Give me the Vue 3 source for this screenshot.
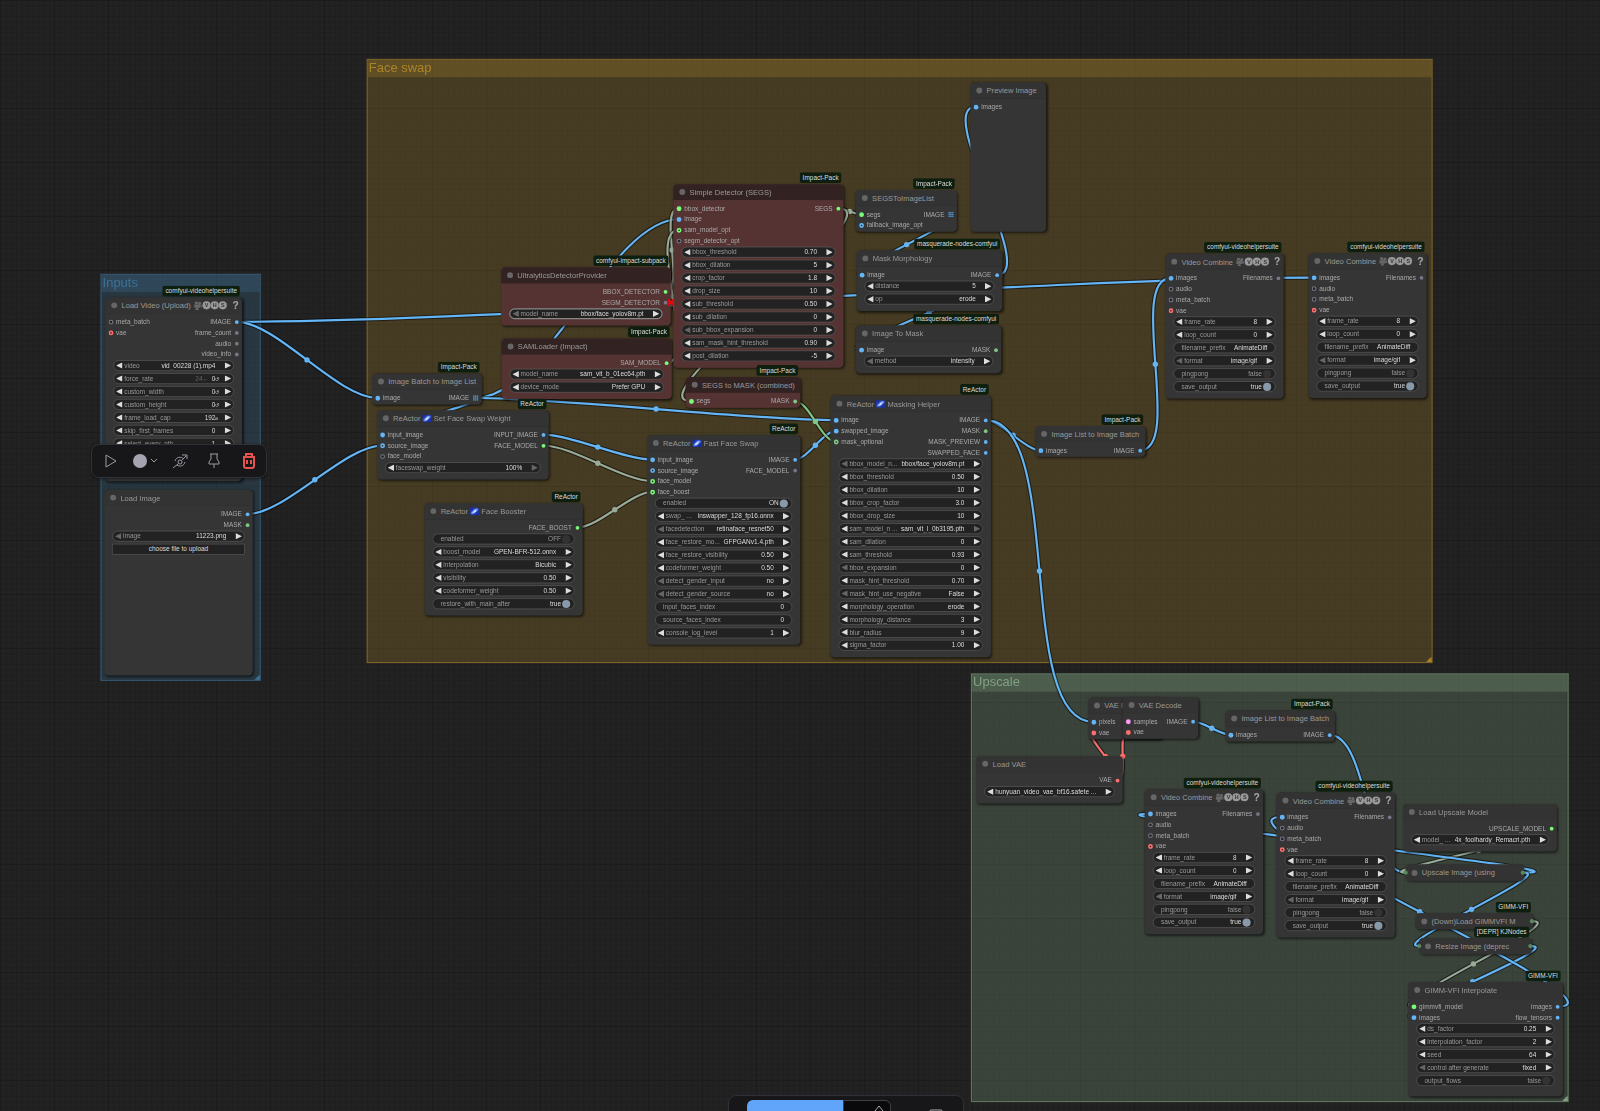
<script setup>
const SLOT = 20
const TITLE = 30

const combo = (label, value, dim = '') => ({ type: 'combo', label, value, dim })
const num = (label, value, dim = '', extra = {}) => ({ type: 'number', label, value, dim, ...extra })
const text = (label, value) => ({ type: 'text', label, value })
const toggle = (label, value, on) => ({ type: 'toggle', label, value, on })
const i = (name, type, opt = false) => ({ name, type, opt })

const videoCombine = (id, x, y, w) => ({
  id, x, y, w, title: 'Video Combine', vhs: true, badge: 'comfyui-videohelpersuite',
  ins: [i('images', 'image'), i('audio', 'any', true), i('meta_batch', 'any', true), i('vae', 'vae', true)],
  outs: [i('Filenames', 'any')],
  widgets: [
    num('frame_rate', '8'), num('loop_count', '0'), text('filename_prefix', 'AnimateDiff'),
    combo('format', 'image/gif', 'l'), toggle('pingpong', 'false', false), toggle('save_output', 'true', true),
  ],
})

const groups = [
  { title: 'Inputs', x: 186, y: 507, w: 297, h: 754, tone: 'blue' },
  { title: 'Face swap', x: 679, y: 109, w: 1974, h: 1119, tone: 'yellow' },
  { title: 'Upscale', x: 1798, y: 1247, w: 1107, h: 794, tone: 'green' },
]

const nodes = [
  {
    id: 'loadVideo', x: 195, y: 551, w: 253, h: 340, title: 'Load Video (Upload)', vhs: true, badge: 'comfyui-videohelpersuite',
    ins: [i('meta_batch', 'any', true), i('vae', 'vae', true)],
    outs: [i('IMAGE', 'image'), i('frame_count', 'any'), i('audio', 'any'), i('video_info', 'any')],
    widgets: [
      combo('video', 'vid_00228 (1).mp4'), num('force_rate', '0', '', { hint: '24←', unit: '↺' }),
      num('custom_width', '0', '', { unit: '↺' }), num('custom_height', '0', '', { unit: '↺' }),
      num('frame_load_cap', '192', '', { unit: '⌀' }), num('skip_first_frames', '0'), num('select_every_nth', '1'),
    ],
  },
  {
    id: 'loadImage', x: 193, y: 907, w: 275, h: 344, title: 'Load Image',
    ins: [], outs: [i('IMAGE', 'image'), i('MASK', 'mask')],
    widgets: [combo('image', '11223.png', 'l'), { type: 'button', label: 'choose file to upload' }],
  },
  {
    id: 'ultra', x: 928, y: 495, w: 314, title: 'UltralyticsDetectorProvider', badge: 'comfyui-impact-subpack', red: true,
    ins: [], outs: [i('BBOX_DETECTOR', 'green'), { name: 'SEGM_DETECTOR', type: 'any', error: true }],
    widgets: [{ ...combo('model_name', 'bbox/face_yolov8m.pt', 'l'), active: true }],
  },
  {
    id: 'sam', x: 929, y: 627, w: 315, title: 'SAMLoader (Impact)', badge: 'Impact-Pack', red: true,
    ins: [], outs: [i('SAM_MODEL', 'green')],
    widgets: [combo('model_name', 'sam_vit_b_01ec64.pth'), combo('device_mode', 'Prefer GPU')],
  },
  {
    id: 'batchToList', x: 689, y: 692, w: 203, title: 'Image Batch to Image List', badge: 'Impact-Pack',
    ins: [i('image', 'image')], outs: [i('IMAGE', 'grid')], widgets: [],
  },
  {
    id: 'weight', x: 698, y: 760, w: 318, title: 'Set Face Swap Weight', reactor: true, badge: 'ReActor',
    ins: [i('input_image', 'image'), i('source_image', 'image', true), i('face_model', 'any', true)],
    outs: [i('INPUT_IMAGE', 'image'), i('FACE_MODEL', 'green')],
    widgets: [combo('faceswap_weight', '100%', 'r')],
  },
  {
    id: 'booster', x: 786, y: 932, w: 293, title: 'Face Booster', reactor: true, badge: 'ReActor',
    ins: [], outs: [i('FACE_BOOST', 'green')],
    widgets: [
      toggle('enabled', 'OFF', false), combo('boost_model', 'GPEN-BFR-512.onnx'), combo('interpolation', 'Bicubic'),
      num('visibility', '0.50'), num('codeformer_weight', '0.50'), toggle('restore_with_main_after', 'true', true),
    ],
  },
  {
    id: 'detector', x: 1247, y: 341, w: 315, title: 'Simple Detector (SEGS)', badge: 'Impact-Pack', red: true,
    ins: [i('bbox_detector', 'green'), i('image', 'image'), i('sam_model_opt', 'green', true), i('segm_detector_opt', 'any', true)],
    outs: [i('SEGS', 'green')],
    widgets: [
      num('bbox_threshold', '0.70'), num('bbox_dilation', '5'), num('crop_factor', '1.8'), num('drop_size', '10'),
      num('sub_threshold', '0.50'), num('sub_dilation', '0'), num('sub_bbox_expansion', '0', 'l'),
      num('sam_mask_hint_threshold', '0.90'), num('post_dilation', '-5'),
    ],
  },
  {
    id: 'segsMask', x: 1270, y: 698, w: 212, title: 'SEGS to MASK (combined)', badge: 'Impact-Pack', red: true,
    ins: [i('segs', 'green')], outs: [i('MASK', 'mask')], widgets: [],
  },
  {
    id: 'segsList', x: 1585, y: 352, w: 187, title: 'SEGSToImageList', badge: 'Impact-Pack',
    ins: [i('segs', 'green'), i('fallback_image_opt', 'image', true)], outs: [i('IMAGE', 'grid')], widgets: [],
  },
  {
    id: 'morph', x: 1586, y: 464, w: 270, title: 'Mask Morphology', badge: 'masquerade-nodes-comfyui',
    ins: [i('image', 'image')], outs: [i('IMAGE', 'image')],
    widgets: [num('distance', '5'), combo('op', 'erode')],
  },
  {
    id: 'toMask', x: 1585, y: 603, w: 269, title: 'Image To Mask', badge: 'masquerade-nodes-comfyui',
    ins: [i('image', 'image')], outs: [i('MASK', 'mask')], widgets: [combo('method', 'intensity', 'l')],
  },
  {
    id: 'preview', x: 1797, y: 153, w: 140, h: 276, title: 'Preview Image',
    ins: [i('images', 'image')], outs: [], widgets: [],
  },
  {
    id: 'swap', x: 1198, y: 806, w: 284, title: 'Fast Face Swap', reactor: true, badge: 'ReActor',
    ins: [i('input_image', 'image'), i('source_image', 'image', true), i('face_model', 'green', true), i('face_boost', 'green', true)],
    outs: [i('IMAGE', 'image'), i('FACE_MODEL', 'any')],
    widgets: [
      toggle('enabled', 'ON', true), combo('swap_ ...', 'inswapper_128_fp16.onnx'), combo('facedetection', 'retinaface_resnet50', 'l'),
      combo('face_restore_mo...', 'GFPGANv1.4.pth'), num('face_restore_visibility', '0.50'), num('codeformer_weight', '0.50'),
      combo('detect_gender_input', 'no', 'l'), combo('detect_gender_source', 'no', 'l'),
      text('input_faces_index', '0'), text('source_faces_index', '0'), combo('console_log_level', '1'),
    ],
  },
  {
    id: 'masking', x: 1538, y: 733, w: 297, title: 'Masking Helper', reactor: true, badge: 'ReActor',
    ins: [i('image', 'image'), i('swapped_image', 'image'), i('mask_optional', 'mask', true)],
    outs: [i('IMAGE', 'image'), i('MASK', 'mask'), i('MASK_PREVIEW', 'image'), i('SWAPPED_FACE', 'image')],
    widgets: [
      combo('bbox_model_n...', 'bbox/face_yolov8m.pt', 'l'), num('bbox_threshold', '0.50'), num('bbox_dilation', '10'),
      num('bbox_crop_factor', '3.0'), num('bbox_drop_size', '10'), combo('sam_model_n ...', 'sam_vit_l_0b3195.pth', 'r'),
      num('sam_dilation', '0'), num('sam_threshold', '0.93'), num('bbox_expansion', '0', 'l'), num('mask_hint_threshold', '0.70'),
      combo('mask_hint_use_negative', 'False', 'l'), combo('morphology_operation', 'erode'), num('morphology_distance', '3'),
      num('blur_radius', '9'), num('sigma_factor', '1.00'),
    ],
  },
  {
    id: 'listBatchA', x: 1917, y: 789, w: 204, title: 'Image List to Image Batch', badge: 'Impact-Pack',
    ins: [i('images', 'image')], outs: [i('IMAGE', 'image')], widgets: [],
  },
  videoCombine('combineA', 2158, 470, 219),
  videoCombine('combineB', 2423, 469, 219),
  {
    id: 'encode', x: 2015, y: 1292, w: 138, title: 'VAE Encode',
    ins: [i('pixels', 'image'), i('vae', 'vae')], outs: [], widgets: [],
  },
  {
    id: 'decode', x: 2079, y: 1291, w: 140, title: 'VAE Decode',
    ins: [i('samples', 'latent'), i('vae', 'vae')], outs: [i('IMAGE', 'image')], widgets: [],
  },
  {
    id: 'loadVae', x: 1808, y: 1400, w: 271, title: 'Load VAE',
    ins: [], outs: [i('VAE', 'vae')], widgets: [combo('', 'hunyuan_video_vae_bf16.safete ...')],
  },
  {
    id: 'listBatchB', x: 2269, y: 1316, w: 203, title: 'Image List to Image Batch', badge: 'Impact-Pack',
    ins: [i('images', 'image')], outs: [i('IMAGE', 'image')], widgets: [],
  },
  videoCombine('combineC', 2120, 1462, 219),
  videoCombine('combineD', 2364, 1468, 219),
  {
    id: 'upModel', x: 2598, y: 1489, w: 285, title: 'Load Upscale Model',
    ins: [], outs: [i('UPSCALE_MODEL', 'green')], widgets: [combo('model_ ...', '4x_foolhardy_Remacri.pth')],
  },
  { id: 'upscale', x: 2603, y: 1601, w: 219, title: 'Upscale Image (using', collapsed: true, ins: [1], outs: [1] },
  { id: 'gimmLoad', x: 2621, y: 1691, w: 218, title: '(Down)Load GIMMVFI M', badge: 'GIMM-VFI', collapsed: true, ins: [], outs: [1] },
  { id: 'resize', x: 2628, y: 1737, w: 208, title: 'Resize Image (deprec', badge: '[DEPR] KJNodes', collapsed: true, ins: [1], outs: [1] },
  {
    id: 'gimm', x: 2608, y: 1819, w: 286, h: 211, title: 'GIMM-VFI Interpolate', badge: 'GIMM-VFI',
    ins: [i('gimmvfi_model', 'green'), i('images', 'image')], outs: [i('images', 'image'), i('flow_tensors', 'image')],
    widgets: [
      num('ds_factor', '0.25'), num('interpolation_factor', '2'), num('seed', '64'),
      combo('control after generate', 'fixed', 'l'), toggle('output_flows', 'false', false),
    ],
  },
]

const byId = Object.fromEntries(nodes.map((n) => [n.id, n]))

const wires = [
  ['loadVideo', 0, 'combineB', 0, 'image'], ['loadVideo', 0, 'batchToList', 0, 'image'],
  ['loadImage', 0, 'weight', 1, 'image'], ['batchToList', 0, 'detector', 1, 'image'],
  ['batchToList', 0, 'weight', 0, 'image'], ['batchToList', 0, 'masking', 0, 'image'],
  ['weight', 0, 'swap', 0, 'image'], ['weight', 1, 'swap', 2, 'plain'], ['booster', 0, 'swap', 3, 'plain'],
  ['ultra', 0, 'detector', 0, 'plain'], ['sam', 0, 'detector', 2, 'plain'],
  ['detector', 0, 'segsList', 0, 'plain'], ['detector', 0, 'segsMask', 0, 'plain'],
  ['segsList', 0, 'morph', 0, 'image'], ['morph', 0, 'toMask', 0, 'image'], ['morph', 0, 'preview', 0, 'image'],
  ['swap', 0, 'masking', 1, 'image'], ['segsMask', 0, 'masking', 2, 'mask'],
  ['masking', 0, 'listBatchA', 0, 'image'], ['masking', 0, 'encode', 0, 'image'],
  ['listBatchA', 0, 'combineA', 0, 'image'], ['loadVae', 0, 'encode', 1, 'vae'], ['loadVae', 0, 'decode', 1, 'vae'],
  ['decode', 0, 'listBatchB', 0, 'image'], ['listBatchB', 0, 'upscale', 0, 'image'],
  ['upModel', 0, 'upscale', 0, 'plain'], ['upscale', 0, 'combineC', 0, 'image'], ['upscale', 0, 'resize', 0, 'image'],
  ['resize', 0, 'gimm', 1, 'image'], ['gimmLoad', 0, 'gimm', 0, 'plain'], ['gimm', 0, 'combineD', 0, 'image'],
]

function port(node, side, index) {
  const inset = node.collapsed ? 0 : 10
  return {
    x: side === 'out' ? node.x + node.w - inset : node.x + inset,
    y: node.collapsed ? node.y + TITLE / 2 : node.y + TITLE + 15 + index * SLOT,
  }
}

const links = wires.map(([from, out, to, into, kind]) => {
  const a = port(byId[from], 'out', out)
  const b = port(byId[to], 'in', into)
  const reach = Math.hypot(b.x - a.x, b.y - a.y) / 4
  return {
    kind,
    d: `M${a.x} ${a.y}C${a.x + reach} ${a.y} ${b.x - reach} ${b.y} ${b.x} ${b.y}`,
    cx: (a.x + b.x) / 2,
    cy: (a.y + b.y) / 2,
  }
})
</script>

<template>
  <main class="editor">
    <div class="graph">
      <section
        v-for="g in groups" :key="g.title" class="group" :class="g.tone"
        :style="{ left: g.x + 'px', top: g.y + 'px', width: g.w + 'px', height: g.h + 'px' }"
      >
        <h2>{{ g.title }}</h2>
      </section>

      <svg class="links" aria-hidden="true">
        <g v-for="(l, n) in links" :key="n" :class="l.kind">
          <path class="edge" :d="l.d" />
          <path class="wire" :d="l.d" />
          <circle :cx="l.cx" :cy="l.cy" r="5" />
        </g>
      </svg>

      <article
        v-for="node in nodes" :key="node.id" class="node" :class="{ red: node.red, collapsed: node.collapsed }"
        :style="{ left: node.x + 'px', top: node.y + 'px', width: node.w + 'px', minHeight: node.h ? node.h + 'px' : null }"
      >
        <span v-if="node.badge" class="badge">{{ node.badge }}</span>
        <header>
          <i class="knob"></i>
          <h3>
            <template v-if="node.reactor">
              ReActor
              <svg class="galaxy" viewBox="0 0 18 16"><rect width="18" height="16" rx="1" fill="#2439b8" /><path d="M0 0H7L2 6 0 7ZM18 8V16H10L14 12Z" fill="#1b2ba0" /><path d="M2 13C0 10 5 8 7 5S15 1 17 3 14 8 11 11 4 15 2 13Z" fill="#5b84e8" /><path d="M4 12 7 8 9 6 14 3 12 8 9 11Z" fill="#d9e8ff" /></svg>
            </template>
            {{ node.title }}
          </h3>
          <span v-if="node.vhs" class="vhs">
            <svg viewBox="0 0 16 16"><circle cx="5" cy="3" r="3" /><circle cx="11" cy="4" r="3" /><path d="M1 6H12V12H1ZM12 8 15 6V12L12 10ZM5 12H8L10 16H3Z" /></svg>
            <b>V</b><b>H</b><b>S</b>
          </span>
          <button v-if="node.vhs" class="help" aria-label="Help">?</button>
        </header>

        <template v-if="node.collapsed">
          <i v-if="node.ins.length" class="pin left"></i>
          <i v-if="node.outs.length" class="pin right"></i>
        </template>

        <div v-else class="body">
          <div class="slots">
            <ul class="ins">
              <li v-for="s in node.ins" :key="s.name"><i class="dot" :class="[s.type, { ring: s.opt }]"></i>{{ s.name }}</li>
            </ul>
            <ul class="outs">
              <li v-for="s in node.outs" :key="s.name">
                {{ s.name }}
                <svg v-if="s.type === 'grid'" class="cells" viewBox="0 0 11 11"><path d="M0 0H3V3H0ZM4 0H7V3H4ZM8 0H11V3H8ZM0 4H3V7H0ZM4 4H7V7H4ZM8 4H11V7H8ZM0 8H3V11H0ZM4 8H7V11H4ZM8 8H11V11H8Z" /></svg>
                <i v-else class="dot" :class="s.type"></i>
                <svg v-if="s.error" class="error" viewBox="0 0 14 14"><path d="M2 2 12 12M12 2 2 12" /></svg>
              </li>
            </ul>
          </div>
          <div v-if="node.widgets.length" class="widgets">
            <template v-for="(w, n) in node.widgets" :key="n">
              <button v-if="w.type === 'button'" class="upload">{{ w.label }}</button>
              <div v-else class="widget" :class="[w.type, { active: w.active }]">
                <button v-if="w.type === 'combo' || w.type === 'number'" class="step prev" :class="{ dim: w.dim === 'l' }" aria-label="Previous"></button>
                <label v-if="w.label" :for="`${node.id}-${n}`">{{ w.label }}</label>
                <template v-if="w.type === 'toggle'">
                  <span class="state" :class="{ on: w.on }">{{ w.value }}</span>
                  <input :id="`${node.id}-${n}`" type="checkbox" :checked="w.on" />
                </template>
                <template v-else>
                  <select v-if="w.type === 'combo'" :id="`${node.id}-${n}`" :aria-label="w.label || node.title"><option>{{ w.value }}</option></select>
                  <template v-else>
                    <span v-if="w.hint" class="hint">{{ w.hint }}</span>
                    <input :id="`${node.id}-${n}`" type="text" :value="w.value" :class="{ short: w.hint }" />
                  </template>
                </template>
                <template v-if="w.type === 'combo' || w.type === 'number'">
                  <span class="unit">{{ w.unit }}</span>
                  <button class="step next" :class="{ dim: w.dim === 'r' }" aria-label="Next"></button>
                </template>
              </div>
            </template>
          </div>
        </div>
      </article>
    </div>

    <nav class="toolbox" aria-label="Selection">
      <button aria-label="Run selection"><svg width="16" height="16" viewBox="0 0 16 16"><path d="M3 2 13 8 3 14Z" /></svg></button>
      <button aria-label="Colour"><i class="swatch"></i><svg width="8" height="8" viewBox="0 0 8 8"><path d="M1 2 4 5 7 2" /></svg></button>
      <button aria-label="Bypass"><svg width="16" height="16" viewBox="0 0 16 16"><circle cx="8" cy="9" r="2" /><path d="M1 15 6 11M10 7 14 3M10 2H15V6M3 8C4 4 9 3 12 6M13 9C12 13 8 14 5 12" /></svg></button>
      <button aria-label="Pin"><svg width="16" height="16" viewBox="0 0 16 16"><path d="M4 1H12M5 1V6L3 9V11H13V9L11 6V1M8 11V15" /></svg></button>
      <button class="danger" aria-label="Delete"><svg width="16" height="16" viewBox="0 0 16 16"><path d="M2 4H14M5 4V1H11V4M3 4V13Q3 15 5 15H11Q13 15 13 13V4M6 7V11M10 7V11" /></svg></button>
    </nav>

    <div class="runbar">
      <i class="grip"></i>
      <button class="run"><svg width="12" height="12" viewBox="0 0 12 12"><path d="M2 1 10 6 2 11Z" /></svg>Run</button>
      <div class="count">
        <input type="text" value="1" aria-label="Batch count" />
        <svg width="12" height="24" viewBox="0 0 12 24"><path d="M2 7 6 2 10 7M2 17 6 22 10 17" /></svg>
      </div>
      <button class="icon" aria-label="Cancel"><svg width="14" height="14" viewBox="0 0 14 14"><path d="M2 2 12 12M12 2 2 12" /></svg></button>
      <button class="icon" aria-label="Stop"><svg width="14" height="14" viewBox="0 0 14 14"><rect x="1" y="1" width="12" height="12" rx="1" /></svg></button>
    </div>
  </main>
</template>

<style>
body {
  background: #222;
}
</style>

<style scoped>
.editor {
  position: relative;
  height: 100vh;
  overflow: hidden;
  background: #222;
  font-family: "Liberation Sans", Arial, sans-serif;
}
button, input, select {
  margin: 0;
  padding: 0;
  border: 0;
  background: none;
  color: inherit;
  font: inherit;
}
h2, h3, ul {
  margin: 0;
  padding: 0;
  font-weight: 400;
  list-style: none;
}

/* graph space: everything inside is in graph units, shown at 54% zoom */
.graph {
  position: absolute;
  top: 0;
  left: 0;
  width: calc(100% / 0.54);
  height: calc(100% / 0.54);
  transform: scale(0.54);
  transform-origin: 0 0;
  background-image:
    linear-gradient(rgba(0, 0, 0, 0.12) 1px, transparent 1px),
    linear-gradient(90deg, rgba(0, 0, 0, 0.12) 1px, transparent 1px),
    linear-gradient(rgba(0, 0, 0, 0.08) 1px, transparent 1px),
    linear-gradient(90deg, rgba(0, 0, 0, 0.08) 1px, transparent 1px);
  background-size: 100px 100px, 100px 100px, 10px 10px, 10px 10px;
}
.group {
  position: absolute;
  box-sizing: border-box;
  border: 2px solid rgb(var(--tone) / 0.5);
  background: rgb(var(--tone) / 0.25);
}
.group::after {
  content: "";
  position: absolute;
  right: 0;
  bottom: 0;
  border: 5px solid rgb(var(--tone) / 0.9);
  border-top-color: transparent;
  border-left-color: transparent;
}
.group h2 {
  height: 32px;
  padding-left: 2px;
  background: rgb(var(--tone) / 0.25);
  color: rgb(var(--tone) / 0.9);
  font-size: 24px;
  line-height: 28px;
}
.blue { --tone: 63 120 158; }
.yellow { --tone: 181 139 42; }
.green { --tone: 136 170 136; }

.links {
  position: absolute;
  inset: 0;
  width: 100%;
  height: 100%;
  overflow: visible;
}
.links path { fill: none; }
.links .edge { stroke: rgba(0, 0, 0, 0.5); stroke-width: 8px; }
.links .wire { stroke: var(--c); stroke-width: 4px; }
.links circle { fill: var(--c); }
.links .image { --c: #64b5f6; }
.links .plain { --c: #99aa99; }
.links .mask { --c: #81c784; }
.links .vae { --c: #ff6e6e; }

.node {
  position: absolute;
  box-sizing: border-box;
  border-radius: 8px;
  background: #353535;
  box-shadow: 2px 2px 5px rgba(0, 0, 0, 0.6);
  color: #aaa;
  font-size: 12px;
}
.node header {
  display: flex;
  align-items: center;
  box-sizing: border-box;
  height: 30px;
  padding: 0 6px 0 11px;
  border-bottom: 1px solid #2b2b2b;
  border-radius: 8px 8px 0 0;
  background: #333;
}
.red { background: #533; }
.red header { border-color: #322; background: #322; }
.collapsed header { border: 0; border-radius: 8px; }
.knob {
  flex: none;
  width: 11px;
  height: 11px;
  margin-right: 8px;
  border-radius: 50%;
  background: #666;
}
.node h3 {
  color: #999;
  font-size: 14px;
  line-height: 28px;
  white-space: nowrap;
}
.galaxy {
  width: 17px;
  height: 14px;
  vertical-align: -2px;
}
.vhs {
  display: flex;
  align-items: center;
  margin-left: 5px;
}
.vhs svg { width: 17px; height: 16px; fill: #666; }
.vhs b {
  width: 15px;
  height: 15px;
  border-radius: 50%;
  background: #999;
  color: #333;
  font-size: 10px;
  line-height: 15px;
  text-align: center;
}
.help {
  margin-left: auto;
  color: #aaa;
  font-size: 19px;
  font-weight: 700;
}
.badge {
  position: absolute;
  right: 4px;
  bottom: calc(100% + 1px);
  height: 20px;
  padding: 0 5px;
  border-radius: 4px;
  background: #0f1f0f;
  color: #ddd;
  line-height: 20px;
  white-space: nowrap;
}
.node:not(.collapsed) .badge { top: -22px; bottom: auto; }

.slots {
  display: flex;
  justify-content: space-between;
  padding: 5px 6px 2px;
}
.slots li {
  display: flex;
  align-items: center;
  height: 20px;
  gap: 5px;
  position: relative;
  white-space: nowrap;
}
.outs li { justify-content: flex-end; gap: 7px; }
.dot {
  box-sizing: border-box;
  width: 9px;
  height: 9px;
  border-radius: 50%;
  background: var(--c);
}
.outs .dot { width: 7px; height: 7px; }
.dot.ring { border: 3px solid var(--c); background: #222; }
.dot.image { --c: #64b5f6; }
.dot.any { --c: #777788; }
.dot.any.ring { border-width: 2px; }
.dot.green { --c: #77ff77; }
.dot.mask { --c: #81c784; }
.dot.vae { --c: #ff6e6e; }
.dot.latent { --c: #ff9cf9; }
.cells { width: 10px; height: 10px; fill: #5598cf; }
.error {
  position: absolute;
  right: -13px;
  width: 14px;
  height: 14px;
  stroke: #f00;
  stroke-width: 4px;
}
.pin {
  position: absolute;
  top: 11px;
  width: 8px;
  height: 8px;
  border-radius: 50%;
  background: #5a875c;
}
.pin.left { left: -4px; }
.pin.right { right: -2px; }

.widgets {
  display: flex;
  flex-direction: column;
  gap: 4px;
  padding: 0 15px 12px;
  margin-top: -1px;
}
.widget {
  display: flex;
  align-items: center;
  box-sizing: border-box;
  height: 20px;
  border: 1px solid #666;
  border-radius: 10px;
  background: #222;
  color: #ddd;
}
.widget.active { border: 2px solid #888; }
.widget label { flex: none; color: #999; white-space: nowrap; }
.widget select, .widget input[type="text"] {
  flex: 1;
  min-width: 0;
  height: 16px;
  appearance: none;
  outline: none;
  text-align: right;
  text-align-last: right;
}
.widget input.short[type="text"] { flex: none; width: 12px; }
.hint { margin-left: auto; color: #666; }
.text, .toggle { padding: 0 14px; }
.toggle { padding-right: 7px; }
.state { margin-left: auto; color: #999; }
.state.on { color: #ddd; }
.toggle input {
  width: 15px;
  height: 15px;
  margin-left: 2px;
  appearance: none;
  border-radius: 50%;
  background: #333;
}
.toggle input:checked { background: #8899aa; }
.unit {
  width: 14px;
  flex: none;
  font-size: 10px;
}
.step {
  flex: none;
  width: 19px;
  height: 12px;
}
.step::before {
  content: "";
  display: block;
  width: 12px;
  height: 12px;
  margin-left: 4px;
  background: #ddd;
}
.next::before { margin-left: 3px; }
.prev::before { clip-path: polygon(0 50%, 100% 0, 100% 100%); }
.next::before { clip-path: polygon(0 0, 100% 50%, 0 100%); }
.step.dim::before { background: #666; }
.upload {
  height: 20px;
  border: 1px solid #666;
  background: #222;
  color: #ddd;
}

.toolbox {
  position: absolute;
  top: 444px;
  left: 91px;
  display: flex;
  box-sizing: border-box;
  width: 176px;
  height: 34px;
  padding-left: 2px;
  border: 1px solid #303138;
  border-radius: 8px;
  background: #171719;
  box-shadow: 0 1px 3px rgba(0, 0, 0, 0.5);
}
.toolbox button {
  display: flex;
  flex: 1 1 0;
  align-items: center;
  justify-content: center;
  gap: 3px;
}
.toolbox svg { fill: none; stroke: #9a9aa2; stroke-width: 1px; }
.toolbox .danger svg { stroke: #e5524f; stroke-width: 2px; }
.swatch {
  width: 14px;
  height: 14px;
  border-radius: 50%;
  background: #a5a4b0;
}

.runbar {
  position: absolute;
  top: calc(100% - 16px);
  left: 728px;
  display: flex;
  align-items: center;
  box-sizing: border-box;
  width: 236px;
  height: 42px;
  padding: 0 12px 0 5px;
  border: 1px solid #303138;
  border-radius: 8px;
  background: #171719;
  color: #ddd;
  font-size: 14px;
}
.grip {
  box-sizing: border-box;
  width: 6px;
  height: 10px;
  margin-right: 7px;
  border: solid #888;
  border-width: 0 2px;
}
.run {
  display: flex;
  align-items: center;
  justify-content: center;
  gap: 7px;
  width: 96px;
  height: 32px;
  border-radius: 6px 0 0 6px;
  background: #60a5fa;
  color: #0b1a2e;
  padding-right: 12px;
  box-sizing: border-box;
}
.count {
  display: flex;
  align-items: center;
  box-sizing: border-box;
  width: 48px;
  height: 32px;
  padding: 0 5px;
  border: 1px solid #3f3f46;
  border-radius: 0 6px 6px 0;
  background: #09090b;
}
.count input { flex: 1; min-width: 0; text-align: center; }
.count svg, .icon svg { fill: none; stroke: #aaa; }
.icon { display: flex; flex: 1; justify-content: center; }
</style>
